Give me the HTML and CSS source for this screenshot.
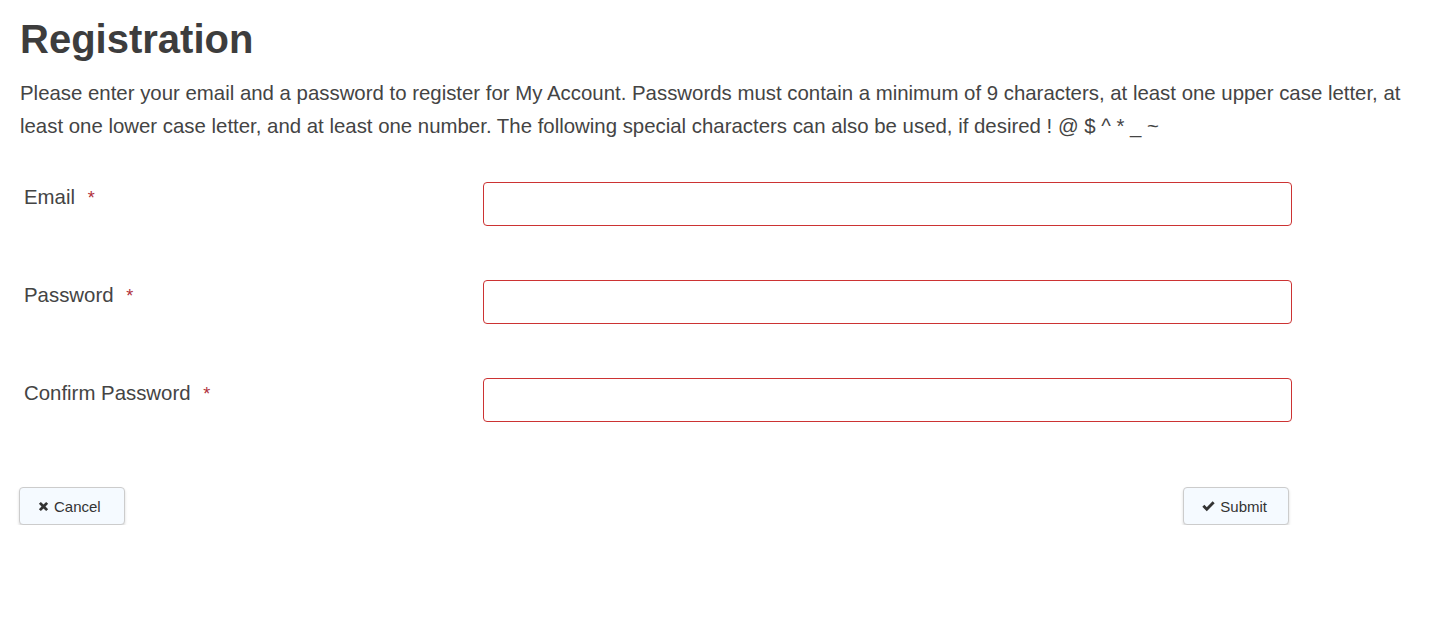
FILE: index.html
```html
<!DOCTYPE html>
<html lang="en">
<head>
  <meta charset="UTF-8" />
  <meta name="viewport" content="width=device-width, initial-scale=1.0"/>
  <title>Registration</title>
  <link rel="stylesheet" href="styles.css">
</head>
<body>

  <div class="page">
    <h1 class="title">Registration</h1>
    <p class="intro">Please enter your email and a password to register for My Account. Passwords must contain a minimum of 9 characters, at least one upper case letter, at least one lower case letter, and at least one number. The following special characters can also be used, if desired ! @ $ ^ * _ ~</p>

    <form class="form">
      <div class="form-row">
        <label class="form-label" for="email">Email <span class="req">*</span></label>
        <input class="form-input" type="email" id="email">
      </div>
      <div class="form-row">
        <label class="form-label" for="password">Password <span class="req">*</span></label>
        <input class="form-input" type="password" id="password">
      </div>
      <div class="form-row">
        <label class="form-label" for="confirm">Confirm Password <span class="req">*</span></label>
        <input class="form-input" type="password" id="confirm">
      </div>

      <!-- Buttons row -->
      <div class="actions">
        <button type="button" class="btn btn-cancel">
          <svg class="btn-icon" viewBox="0 0 10 10" width="11" height="11"><path d="M0.8 2.6 2.6 0.8 5 3.2 7.4 0.8 9.2 2.6 6.8 5 9.2 7.4 7.4 9.2 5 6.8 2.6 9.2 0.8 7.4 3.2 5Z" fill="#333"/></svg>
          Cancel
        </button>
        <button type="submit" class="btn">
          <svg class="btn-icon" viewBox="0 0 12 10" width="13" height="11"><path d="M0.3 5.3 2.2 3.4 4.4 5.6 9.8 0.2 11.7 2.1 4.4 9.4Z" fill="#333"/></svg>
          Submit
        </button>
      </div>
    </form>
  </div>

</body>
</html>
```

FILE: styles.css
```css
html, body {
  margin: 0;
  padding: 0;
  font-family: "Liberation Sans", Arial, sans-serif;
  color: #444;
  background: #fff;
}

.page {
  padding: 17px 20px 0 20px;
}

.title {
  margin: 0;
  font-size: 40px;
  line-height: 44px;
  font-weight: bold;
  color: #3d3d3d;
}

.intro {
  margin: 16px 0 0 0;
  font-size: 20.4px;
  line-height: 33px;
  color: #444;
}

.form {
  margin-top: 39px;
  width: 1272px;
}

.form-row {
  display: grid;
  grid-template-columns: 463px 1fr;
  align-items: start;
  margin-bottom: 54px;
}

.form-label {
  padding: 2px 0 0 4px;
  font-size: 20.4px;
  line-height: 26px;
  color: #444;
}

.req {
  color: #b0303a;
  margin-left: 7px;
  font-size: 18px;
}

.form-input {
  box-sizing: border-box;
  height: 44px;
  width: 100%;
  border: 1px solid #cc3333;
  border-radius: 4px;
  font-size: 16px;
  padding: 6px 12px;
  margin: 0;
}

.actions {
  display: flex;
  justify-content: space-between;
  padding-top: 11px;
  padding-right: 3px;
  margin-left: -1px;
}

.btn {
  display: flex;
  align-items: center;
  gap: 5px;
  height: 38px;
  padding: 0 21px 0 18px;
  font-family: "Liberation Sans", Arial, sans-serif;
  font-size: 15px;
  color: #333;
  background-color: #f5faff;
  border: 1px solid #ccc;
  border-radius: 4px;
  box-shadow: 0 2px 3px rgba(0, 0, 0, 0.15);
  cursor: pointer;
}

.btn-cancel {
  padding-right: 23px;
}

.btn-icon {
  flex-shrink: 0;
}
```
